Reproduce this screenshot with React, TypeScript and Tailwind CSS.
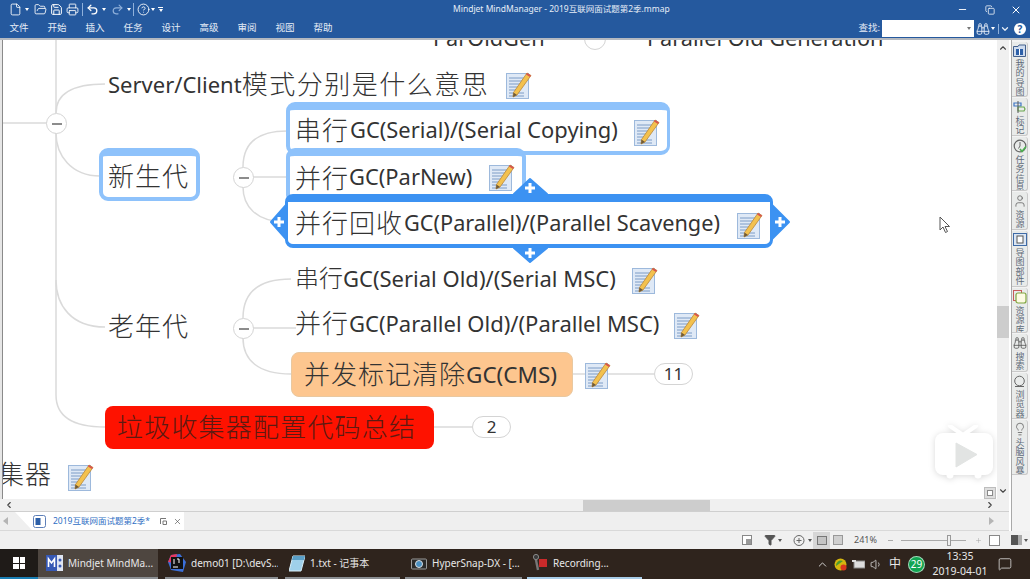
import {
  Binoculars,
  ChevronDown,
  ChevronLeft,
  ChevronRight,
  ChevronUp,
  CircleHelp,
  Copy,
  File,
  Filter,
  FolderOpen,
  Lightbulb,
  Minus,
  MessageSquare,
  Plus,
  Printer,
  Redo2,
  Save,
  Undo2,
  User,
  Volume1,
  X,
} from 'lucide-react'

const Caret = ({ className = 'border-t-white' }: { className?: string }) => (
  <span className={`inline-block w-0 h-0 border-x-[2.5px] border-x-transparent border-t-[3px] ${className}`} />
)

function NoteIcon({ className = '' }: { className?: string }) {
  return (
    <svg width="26" height="29" viewBox="0 0 26 29" className={`shrink-0 ${className}`}>
      <rect x="0.5" y="3.5" width="22" height="25" fill="#dfe9f6" stroke="#9db9dc" />
      <g stroke="#7d9cc6" strokeWidth="1">
        <path d="M3 8h15M3 11h14M3 14h12M3 17h10M3 20h9M3 23h15M3 26h15" />
      </g>
      <path d="M21 3 L25 5.5 L11 25 L7 27 L7.5 22.5 Z" fill="#f3c14e" stroke="#b9863a" strokeWidth="0.8" />
      <path d="M21 3 L25 5.5 L24 7 L20 4.5 Z" fill="#d9534f" />
      <path d="M7 27 L7.5 22.5 L11 25 Z" fill="#6e5a3a" />
    </svg>
  )
}

function Cjk({ children, className = 'text-[26px] tracking-[1px]' }: { children: string; className?: string }) {
  return <span className={`font-light ${className}`}>{children}</span>
}

function Toggle({ className }: { className: string }) {
  return (
    <div className={`absolute w-[21px] h-[21px] rounded-full bg-white border border-[#d4d4d4] flex items-center justify-center ${className}`}>
      <span className="w-[10px] h-[2px] bg-[#8c8c8c]" />
    </div>
  )
}

function Pill({ className, children }: { className: string; children: string }) {
  return (
    <div className={`absolute h-[22px] rounded-full bg-white border border-[#d4d4d4] flex items-center justify-center text-[17px] text-[#333] ${className}`}>
      {children}
    </div>
  )
}

function MindMap() {
  return (
    <div className="relative flex-1 bg-white overflow-hidden border-l border-[#8a8a8a] text-[#333]">
      <svg width="994" height="459" className="absolute left-0 top-0" fill="none" stroke="#dadada" strokeWidth="1.5">
        <path d="M0 83H44M53 0V73" />
        <path d="M53 73C53 55 68 44 102 44" />
        <path d="M53 93C53 115 68 136 97 136" />
        <path d="M53 93V355C53 375 68 387 102 387" />
        <path d="M53 240C53 265 68 287 102 287" />
        <path d="M250 137H284M240 127C240 105 252 91 284 91M240 147C240 165 252 182 283 182" />
        <path d="M250 288H293M240 278C240 255 252 239 288 239M240 298C240 320 255 334 288 334" />
        <path d="M570 334H651M431 387H469" />
      </svg>

      {/* top row is cut by the ribbon */}
      <div className="absolute left-[430px] top-[-17px] text-[21.7px] leading-[30px]">ParOldGen</div>
      <div className="absolute left-[644px] top-[-17px] text-[21.7px] leading-[30px]">Parallel Old Generation</div>
      <div className="absolute left-[581px] top-[-12px] w-[22px] h-[22px] rounded-full bg-white border border-[#d4d4d4]" />

      <Toggle className="left-[43px] top-[73px]" />
      <Toggle className="left-[230px] top-[127px]" />
      <Toggle className="left-[230px] top-[278px]" />

      <div className="absolute left-[105px] top-[26px] h-9 flex items-center whitespace-nowrap">
        <span className="text-[22px]">Server/Client</span>
        <Cjk className="text-[26px] tracking-[1.5px]">模式分别是什么意思</Cjk>
        <NoteIcon className="ml-[17px] mt-[1px]" />
      </div>

      <div className="absolute left-[96px] top-[108px] w-[101px] h-[53px] rounded-[9px] border-[#8ec2fb] border-x-4 border-t-[8px] border-b-4 bg-white flex items-center pl-[5px]">
        <Cjk>新生代</Cjk>
      </div>

      <div className="absolute left-[283px] top-[62px] w-[384px] h-[53px] rounded-[9px] border-[#8ec2fb] border-l-4 border-r-[3px] border-t-[8px] border-b-[4px] bg-white flex items-center pl-[5px] whitespace-nowrap">
        <Cjk>串行</Cjk>
        <span className="text-[21.9px] ml-[1px]">GC(Serial)/(Serial Copying)</span>
        <NoteIcon className="ml-[16px] mt-[2px]" />
      </div>

      <div className="absolute left-[283px] top-[108px] w-[240px] h-[56px] rounded-[9px] border-[#8ec2fb] border-l-4 border-r-[4px] border-t-[8px] bg-white flex items-start pt-[3px] pl-[5px] whitespace-nowrap">
        <Cjk>并行</Cjk>
        <span className="text-[21.9px] mt-[2px]">GC(ParNew)</span>
        <NoteIcon className="ml-[17px] mt-[3px]" />
      </div>

      <div className="absolute left-[282px] top-[154px] w-[488px] h-[54px] rounded-[8px] border-[#3c92f2] border-x-[3px] border-t-[8px] border-b-[4px] bg-white flex items-center pl-[7px] whitespace-nowrap">
        <Cjk>并行回收</Cjk>
        <span className="text-[21.7px] ml-[1px]">GC(Parallel)/(Parallel Scavenge)</span>
        <NoteIcon className="ml-[17px] mt-[2px]" />
      </div>

      {/* grips of the selected topic */}
      <svg width="994" height="459" className="absolute left-0 top-0 pointer-events-none">
        <g fill="#3c92f2" stroke="#3c92f2" strokeWidth="2" strokeLinejoin="round">
          <path d="M283 165L268 182L283 199Z" />
          <path d="M511 154L527 139L544 154Z" />
          <path d="M511 208L527 222L544 208Z" />
          <path d="M769 165L786 182L769 199Z" />
        </g>
        <g stroke="#fff" strokeWidth="3">
          <path d="M271 182H281M276 177V187" />
          <path d="M522 148H532M527 143V153" />
          <path d="M522 213H532M527 208V218" />
          <path d="M772 182H782M777 177V187" />
        </g>
      </svg>

      <div className="absolute left-[292px] top-[220px] h-9 flex items-center whitespace-nowrap">
        <Cjk className="text-[24px]">串行</Cjk>
        <span className="text-[22px]">GC(Serial Old)/(Serial MSC)</span>
        <NoteIcon className="ml-[16px] mt-[2px]" />
      </div>

      <div className="absolute left-[292px] top-[265px] h-9 flex items-center whitespace-nowrap">
        <Cjk>并行</Cjk>
        <span className="text-[22px]">GC(Parallel Old)/(Parallel MSC)</span>
        <NoteIcon className="ml-[15px] mt-[3px]" />
      </div>

      <div className="absolute left-[96px] top-[268px] h-9 flex items-center ml-[9px] whitespace-nowrap">
        <Cjk>老年代</Cjk>
      </div>

      <div className="absolute left-[288px] top-[312px] w-[282px] h-[45px] rounded-[8px] bg-[#fdc68f] border border-[#e9c8a0] flex items-center pl-[12px] whitespace-nowrap">
        <Cjk>并发标记清除</Cjk>
        <span className="text-[22.5px]">GC(CMS)</span>
      </div>
      <NoteIcon className="absolute left-[582px] top-[320px]" />
      <Pill className="left-[651px] top-[323px] w-[39px]">11</Pill>

      <div className="absolute left-[102px] top-[366px] w-[329px] h-[43px] rounded-[8px] bg-[#fe1200] flex items-center pl-[12px] whitespace-nowrap text-[#5c1a12]">
        <Cjk className="text-[26px] tracking-[1.2px]">垃圾收集器配置代码总结</Cjk>
      </div>
      <Pill className="left-[469px] top-[376px] w-[39px]">2</Pill>

      <div className="absolute left-[-5px] top-[416px] h-9 flex items-center whitespace-nowrap">
        <Cjk>集器</Cjk>
        <NoteIcon className="ml-[16px] mt-[4px]" />
      </div>

      {/* mouse pointer */}
      <svg width="12" height="18" viewBox="0 0 12 18" className="absolute left-[936px] top-[176px]" fill="#fff" stroke="#555" strokeWidth="1">
        <path d="M1 1V14L4 11L6.5 16.5L8.5 15.5L6 10.5H10.5Z" />
      </svg>

      {/* player watermark */}
      <svg width="62" height="56" viewBox="0 0 62 56" className="absolute left-[930px] top-[385px] drop-shadow-[0_1px_3px_rgba(0,0,0,0.15)]">
        <path d="M17 1L30 10L43 1" fill="none" stroke="#fff" strokeWidth="4" strokeLinecap="round" />
        <rect x="2" y="8" width="58" height="42" rx="8" fill="#fff" />
        <circle cx="17" cy="50" r="3.5" fill="#fff" />
        <circle cx="45" cy="50" r="3.5" fill="#fff" />
        <path d="M23 18L44 29.5L23 42Z" fill="#e2e4e3" stroke="#e2e4e3" strokeLinejoin="round" />
      </svg>

      <div className="absolute left-[981px] top-[447px] w-[12px] h-[12px] bg-[#dedede] border border-[#bdbdbd] flex items-center justify-center">
        <span className="w-[6px] h-[6px] border border-[#8a8a8a] bg-white" />
      </div>
    </div>
  )
}

function SideTab({ label, height, icon }: { label: string; height: string; icon: React.ReactNode }) {
  return (
    <div className={`w-[16px] ${height} bg-[#e9ebea] border-r border-b border-[#c9c9c9] rounded-r-[3px] flex flex-col items-center pt-[2px] overflow-hidden`}>
      <div className="h-[15px] flex items-center justify-center">{icon}</div>
      <div className="[writing-mode:vertical-rl] whitespace-nowrap mt-[2px] text-[9px] leading-[14px] tracking-[0.5px] text-[#5e6a78]">
        {label}
      </div>
    </div>
  )
}

function SidePanel() {
  return (
    <div className="w-[21px] bg-white flex border-l-0">
      <div className="w-[2px] bg-white" />
      <div className="w-[1px] bg-[#a9a9a9]" />
      <div className="flex-1 bg-[#f3f3f3] flex flex-col gap-[1px] pt-[2px]">
        <SideTab
          label="我的导图"
          height="h-[55px]"
          icon={
            <svg width="13" height="13" viewBox="0 0 13 13">
              <path d="M0.5 2.5H5L6 1H12.5V12.5H0.5Z" fill="#cfdcee" stroke="#44608c" />
              <rect x="3" y="5" width="7" height="6" fill="#2c5fa8" />
              <rect x="6" y="5" width="1" height="6" fill="#fff" />
            </svg>
          }
        />
        <SideTab
          label="标记"
          height="h-[38px]"
          icon={
            <svg width="13" height="14" viewBox="0 0 13 14" fill="none">
              <path d="M1 3H8V6H1Z" stroke="#3f76c4" strokeWidth="1.2" />
              <path d="M5 7H11L12 9L11 11H5Z" stroke="#6aa84f" strokeWidth="1.2" />
              <path d="M5 1V13" stroke="#5a5a5a" />
            </svg>
          }
        />
        <SideTab
          label="任务信息"
          height="h-[54px]"
          icon={
            <svg width="14" height="14" viewBox="0 0 14 14" fill="none">
              <circle cx="7" cy="7" r="5.8" stroke="#666" strokeWidth="1.2" />
              <path d="M7 3V7L5.5 9.5" stroke="#666" />
              <path d="M7 10L9 12.5L13 7.5" stroke="#4caf50" strokeWidth="1.6" />
            </svg>
          }
        />
        <SideTab label="资源" height="h-[38px]" icon={<User size={14} color="#666" strokeWidth={1.4} />} />
        <SideTab
          label="导图部件"
          height="h-[56px]"
          icon={
            <svg width="14" height="13" viewBox="0 0 14 13">
              <rect x="0.5" y="0.5" width="13" height="12" fill="#dbe6f4" stroke="#3e6aa6" />
              <rect x="4" y="3" width="6" height="7" fill="#fff" stroke="#555" />
            </svg>
          }
        />
        <SideTab
          label="资源库"
          height="h-[45px]"
          icon={
            <svg width="14" height="14" viewBox="0 0 14 14" fill="none">
              <rect x="0.5" y="0.5" width="8" height="10" stroke="#c75b5b" />
              <rect x="3" y="3" width="10" height="10" rx="2" fill="#fdfbe3" stroke="#7fa53f" strokeWidth="1.2" />
            </svg>
          }
        />
        <SideTab label="搜索" height="h-[38px]" icon={<Binoculars size={14} color="#555" strokeWidth={1.4} />} />
        <SideTab
          label="浏览器"
          height="h-[46px]"
          icon={
            <svg width="13" height="13" viewBox="0 0 13 13" fill="none">
              <circle cx="6.5" cy="6" r="4.8" stroke="#666" />
              <path d="M2 11.5H11" stroke="#666" />
            </svg>
          }
        />
        <SideTab label="头脑风暴" height="h-[55px]" icon={<Lightbulb size={14} color="#666" strokeWidth={1.4} />} />
      </div>
    </div>
  )
}

function TaskItem({
  icon,
  label,
  className,
}: {
  icon: React.ReactNode
  label: string
  className: string
}) {
  return (
    <div className={`h-full flex items-center gap-[5px] border-b-2 border-[#8b8f93] whitespace-nowrap overflow-hidden ${className}`}>
      {icon}
      <span className="text-[10px] text-[#e8e8e8]">{label}</span>
    </div>
  )
}

export default function App() {
  return (
    <div className="w-[1030px] h-[579px] flex flex-col overflow-hidden bg-[#f0f0f0] font-['Noto_Sans','Noto_Sans_CJK_SC',sans-serif]">
      {/* title bar and ribbon tabs */}
      <div className="h-[38px] bg-[#25599e] text-white shrink-0 relative">
        <div className="h-[19px] flex items-center pl-[9px] text-white">
          <File size={13} strokeWidth={1.6} />
          <span className="ml-[3px] flex"><Caret /></span>
          <FolderOpen size={13} strokeWidth={1.6} className="ml-[5px]" />
          <Save size={13} strokeWidth={1.8} className="ml-[3px]" />
          <Printer size={13} strokeWidth={1.6} className="ml-[3px]" />
          <span className="ml-[3px] w-px h-[13px] bg-[#8fb0da]" />
          <Undo2 size={13} strokeWidth={2.4} className="ml-[3px]" />
          <span className="ml-[3px] flex"><Caret /></span>
          <Redo2 size={13} strokeWidth={2.2} className="ml-[5px] text-[#8fb0da]" />
          <span className="ml-[3px] flex"><Caret /></span>
          <span className="ml-[2px] w-px h-[13px] bg-[#8fb0da]" />
          <CircleHelp size={13} strokeWidth={1.6} className="ml-[3px]" />
          <span className="ml-[1px] flex"><Caret /></span>
          <span className="ml-[3px] flex flex-col items-center gap-[1px]">
            <span className="w-[5px] h-px bg-white" />
            <Caret />
          </span>
          <span className="ml-[290px] text-[8.5px] whitespace-nowrap text-[#e6edf7]">Mindjet MindManager - 2019互联网面试题第2季.mmap</span>
          <div className="ml-auto flex items-center">
            <Minus size={11} strokeWidth={2} />
            <Copy size={10} strokeWidth={1.8} className="ml-[17px]" />
            <X size={12} strokeWidth={2} className="ml-[15px] mr-[8px]" />
          </div>
        </div>
        <div className="h-[19px] flex items-center text-[9.5px] text-[#e6edf7]">
          {['文件', '开始', '插入', '任务', '设计', '高级', '审阅', '视图', '帮助'].map((t) => (
            <span key={t} className="w-[38px] text-center">{t}</span>
          ))}
          <div className="ml-auto flex items-center">
            <span>查找:</span>
            <div className="ml-[2px] w-[92px] h-[17px] bg-white flex items-center justify-end pr-[3px]">
              <Caret className="border-t-[#777]" />
            </div>
            <Binoculars size={14} strokeWidth={1.6} className="ml-[2px]" />
            <span className="ml-[1px] flex"><Caret /></span>
            <span className="ml-[3px] w-px h-[10px] bg-[#8fb0da]" />
            <ChevronDown size={10} strokeWidth={3} className="ml-[1px]" />
            <span className="ml-[4px] mr-[4px] w-[12px] h-[12px] rounded-full bg-white text-[#25599e] text-[10px] font-bold leading-[12px] text-center">?</span>
          </div>
        </div>
      </div>
      <div className="h-[2px] bg-[#b4b9c0] shrink-0" />

      <div className="flex-1 min-h-0 flex bg-[#f0f0f0]">
        <div className="flex-1 flex flex-col min-w-0">
          <div className="h-[459px] flex">
            <div className="w-[2px] bg-[#e6e6e6]" />
            <MindMap />
            <div className="w-[12px] bg-[#f0f0f0] flex flex-col items-center">
              <ChevronUp size={10} strokeWidth={2.6} color="#444" className="mt-[3px]" />
              <div className="mt-[253px] w-full h-[32px] bg-[#cdcdcd]" />
              <ChevronDown size={10} strokeWidth={2.6} color="#444" className="mt-[148px]" />
            </div>
          </div>
          <div className="h-[13px] flex items-center bg-[#f0f0f0] border-b border-[#cfcfcf]">
            <ChevronLeft size={10} strokeWidth={2.6} color="#444" className="ml-[4px]" />
            <div className="ml-[569px] w-[127px] h-[11px] bg-[#cdcdcd]" />
            <ChevronRight size={10} strokeWidth={2.6} color="#444" className="ml-[275px]" />
          </div>
          <div className="h-[19px] flex items-center border-b border-[#d9d9d9] bg-[#efefef]">
            <span className="ml-[3px] w-0 h-0 border-y-[4px] border-y-transparent border-r-[5px] border-r-[#b5b5b5]" />
            <div className="ml-[7px] w-[169px] h-[18px] self-start bg-white [clip-path:polygon(0_0,100%_0,100%_100%,10%_100%)] flex items-center pl-[18px]">
              <svg width="13" height="13" viewBox="0 0 13 13" className="shrink-0">
                <rect x="0.5" y="0.5" width="12" height="12" rx="2" fill="#fff" stroke="#5d7fb8" />
                <rect x="2.5" y="3" width="5" height="7" fill="#2c5fa8" />
              </svg>
              <span className="ml-[7px] text-[8.5px] text-[#2f6fc4] whitespace-nowrap">2019互联网面试题第2季*</span>
              <svg width="7" height="7" viewBox="0 0 7 7" className="ml-[10px] shrink-0" fill="none" stroke="#777">
                <path d="M0.5 6V0.5H6M3 3H6.5V6.5H3Z" />
              </svg>
              <X size={9} strokeWidth={1.6} color="#444" className="ml-[6px]" />
            </div>
            <span className="ml-auto mr-[15px] w-0 h-0 border-y-[4px] border-y-transparent border-l-[5px] border-l-[#b5b5b5]" />
          </div>
        </div>
        <SidePanel />
      </div>

      {/* status bar */}
      <div className="h-[18px] shrink-0 bg-[#f0f0f0] flex items-center justify-end text-[9px] text-[#555]">
        <span className="w-[10px] h-[10px] border border-[#888] bg-white flex items-end justify-end">
          <span className="w-[5px] h-[5px] bg-[#999]" />
        </span>
        <Filter size={12} fill="#555" color="#555" className="ml-[12px]" />
        <span className="ml-[2px] flex"><Caret className="border-t-[#555]" /></span>
        <svg width="12" height="12" viewBox="0 0 12 12" className="ml-[11px]" fill="none" stroke="#666">
          <circle cx="6" cy="6.5" r="5" />
          <path d="M3.5 6.5H8.5M6 4V9" />
        </svg>
        <span className="ml-[3px] flex"><Caret className="border-t-[#555]" /></span>
        <div className="ml-[1px] w-[17px] h-[17px] bg-[#d6d6d6] flex items-center justify-center">
          <span className="w-[10px] h-[9px] border border-[#777] bg-[#c4c4c4]" />
        </div>
        <span className="ml-[3px] w-[10px] h-[10px] border border-[#999] bg-[#d0d0d0]" />
        <span className="ml-[11px] w-[22px]">241%</span>
        <span className="ml-[12px] w-[5px] h-px bg-[#aaa]" />
        <div className="ml-[8px] relative w-[65px] h-px bg-[#aaa]">
          <span className="absolute left-[46px] top-[-5px] w-[4px] h-[11px] bg-[#f0f0f0] border border-[#999]" />
        </div>
        <Plus size={7} color="#999" strokeWidth={1.5} className="ml-[9px]" />
        <span className="ml-[7px] w-[11px] h-[11px] border border-[#888] bg-white" />
        <span className="ml-[11px] w-[11px] h-[10px] bg-[#555] border-r-[4px] border-[#aaa]" />
        <span className="ml-[2px] mr-[2px] flex"><Caret className="border-t-[#555]" /></span>
      </div>

      {/* windows taskbar */}
      <div className="h-[30px] shrink-0 bg-[#2f241d] flex items-center">
        <div className="w-[38px] h-full bg-[#1f1b18] flex items-center justify-center border-b-2 border-[#1a7fb4]">
          <div className="grid grid-cols-2 gap-[1px]">
            <span className="w-[5.5px] h-[5.5px] bg-white" />
            <span className="w-[5.5px] h-[5.5px] bg-white" />
            <span className="w-[5.5px] h-[5.5px] bg-white" />
            <span className="w-[5.5px] h-[5.5px] bg-white" />
          </div>
        </div>
        <TaskItem
          className="w-[120px] pl-[8px] bg-[#4e4640]"
          label="Mindjet MindMa..."
          icon={
            <svg width="17" height="16" viewBox="0 0 17 16" className="shrink-0">
              <rect width="11" height="16" fill="#3658b4" />
              <rect x="11" width="6" height="16" fill="#dfe5f2" />
              <path d="M2.5 12V4L5.5 8L8.5 4V12" fill="none" stroke="#fff" strokeWidth="1.6" />
              <circle cx="14" cy="5" r="1.5" fill="#3658b4" />
              <circle cx="14" cy="11" r="1.5" fill="#3658b4" />
            </svg>
          }
        />
        <TaskItem
          className="ml-[7px] w-[113px] pl-[3px] gap-[3px]"
          label="demo01 [D:\devS..."
          icon={
            <svg width="18" height="18" viewBox="0 0 18 18" className="shrink-0">
              <path d="M3 1L12 0L18 8L15 18L3 16L0 8Z" fill="#3b6fd8" />
              <path d="M3 1L9 0L7 9L0 8Z" fill="#e8385f" />
              <rect x="3" y="3" width="12" height="12" fill="#111" />
              <path d="M5 13H10" stroke="#fff" />
              <path d="M6 5V10M9 5H11V9" stroke="#fff" fill="none" />
            </svg>
          }
        />
        <TaskItem
          className="ml-[7px] w-[115px] pl-[4px]"
          label="1.txt - 记事本"
          icon={
            <svg width="16" height="17" viewBox="0 0 16 17" className="shrink-0">
              <path d="M4 1H16L12 16H0Z" fill="#9fd0ea" stroke="#d8eef8" />
              <path d="M4 1H16L15 5H3Z" fill="#5a9fc7" />
            </svg>
          }
        />
        <TaskItem
          className="ml-[5px] w-[117px] pl-[6px]"
          label="HyperSnap-DX - [..."
          icon={
            <svg width="16" height="14" viewBox="0 0 16 14" className="shrink-0">
              <rect x="0.5" y="3" width="15" height="10" rx="1" fill="#2a2a2a" stroke="#9a9a9a" />
              <circle cx="8" cy="8" r="3.5" fill="#4a90c2" stroke="#ddd" />
            </svg>
          }
        />
        <TaskItem
          className="ml-[5px] w-[115px] pl-[6px] !border-[#a8cde8]"
          label="Recording..."
          icon={
            <svg width="15" height="18" viewBox="0 0 15 18" className="shrink-0">
              <path d="M2 1L5 16" stroke="#777" strokeWidth="2.4" />
              <circle cx="3" cy="3" r="2.6" fill="#3a3a3a" stroke="#888" />
              <rect x="6" y="5" width="8" height="8" fill="#c92a2a" />
            </svg>
          }
        />
        <div className="ml-auto flex items-center text-[#e8e8e8]">
          <ChevronUp size={13} strokeWidth={1.6} />
          <svg width="13" height="13" viewBox="0 0 13 13" className="ml-[5px]">
            <circle cx="6.5" cy="6.5" r="6" fill="#d5b60f" />
            <path d="M2 8A5 5 0 0 1 9 3Z" fill="#4a9a2e" />
            <circle cx="9.5" cy="9.5" r="3" fill="#d9381e" />
          </svg>
          <svg width="13" height="10" viewBox="0 0 13 10" className="ml-[5px]">
            <rect x="2" y="2" width="11" height="7" fill="#ddd" stroke="#888" />
            <path d="M0 1H4V3H0Z" fill="#ddd" />
          </svg>
          <Volume1 size={13} strokeWidth={1.4} className="ml-[5px]" />
          <span className="ml-[6px] text-[12px]">中</span>
          <span className="ml-[7px] w-[17px] h-[17px] rounded-full bg-[#11a552] text-[10px] flex items-center justify-center text-white border border-white/60">29</span>
          <div className="ml-[8px] w-[54px] flex flex-col items-center text-[10.5px] leading-[15px] whitespace-nowrap">
            <span>13:35</span>
            <span>2019-04-01</span>
          </div>
          <MessageSquare size={14} strokeWidth={1.3} className="ml-[11px] mr-[18px]" />
        </div>
      </div>
    </div>
  )
}
